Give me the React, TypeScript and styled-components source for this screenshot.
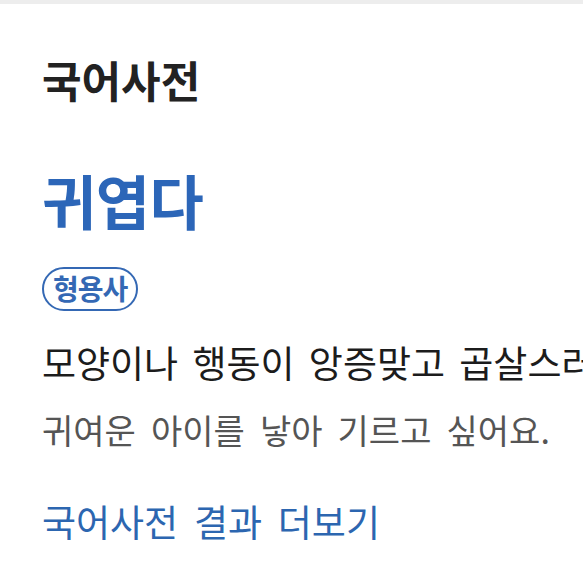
import styled, { createGlobalStyle } from 'styled-components';

const Global = createGlobalStyle`
  html, body { margin: 0; padding: 0; background: #fff; }
  body { font-family: "Noto Sans CJK KR", "Noto Sans", sans-serif; }
`;

const TopBar = styled.div`
  height: 4px;
  background: #ededed;
`;

const Card = styled.section`
  display: flex;
  flex-direction: column;
  align-items: flex-start;
  padding: 54px 0 24px 42px;
  overflow: hidden;
`;

const Heading = styled.h2`
  margin: 0;
  font-size: 43px;
  line-height: 1;
  font-weight: 700;
  color: #222;
`;

const Word = styled.h1`
  margin: 69px 0 0;
  font-size: 59px;
  line-height: 1;
  font-weight: 700;
  color: #2c66b8;
  letter-spacing: -0.5px;
`;

const Pos = styled.span`
  margin-top: 38px;
  display: inline-flex;
  align-items: center;
  height: 44px;
  box-sizing: border-box;
  padding: 0 9px 2px;
  border: 2px solid #3468b4;
  border-radius: 22px;
  font-size: 28px;
  font-weight: 700;
  letter-spacing: -1px;
  color: #3468b4;
`;

const Meaning = styled.p`
  margin: 33px 0 0;
  font-size: 37px;
  line-height: 1;
  word-spacing: 6px;
  color: #1c1c1c;
  white-space: nowrap;
`;

const Example = styled.p`
  margin: 32px 0 0;
  font-size: 34px;
  line-height: 1;
  word-spacing: 7.5px;
  color: #555;
  white-space: nowrap;
`;

const More = styled.a`
  margin-top: 56px;
  font-size: 37px;
  line-height: 1;
  word-spacing: 7.5px;
  color: #2c66b0;
  text-decoration: none;
  white-space: nowrap;
`;

export default function App() {
  return (
    <>
      <Global />
      <TopBar />
      <Card>
        <Heading>국어사전</Heading>
        <Word>귀엽다</Word>
        <Pos>형용사</Pos>
        <Meaning>모양이나 행동이 앙증맞고 곱살스러워 사랑스럽다.</Meaning>
        <Example>귀여운 아이를 낳아 기르고 싶어요.</Example>
        <More href="#">국어사전 결과 더보기</More>
      </Card>
    </>
  );
}
